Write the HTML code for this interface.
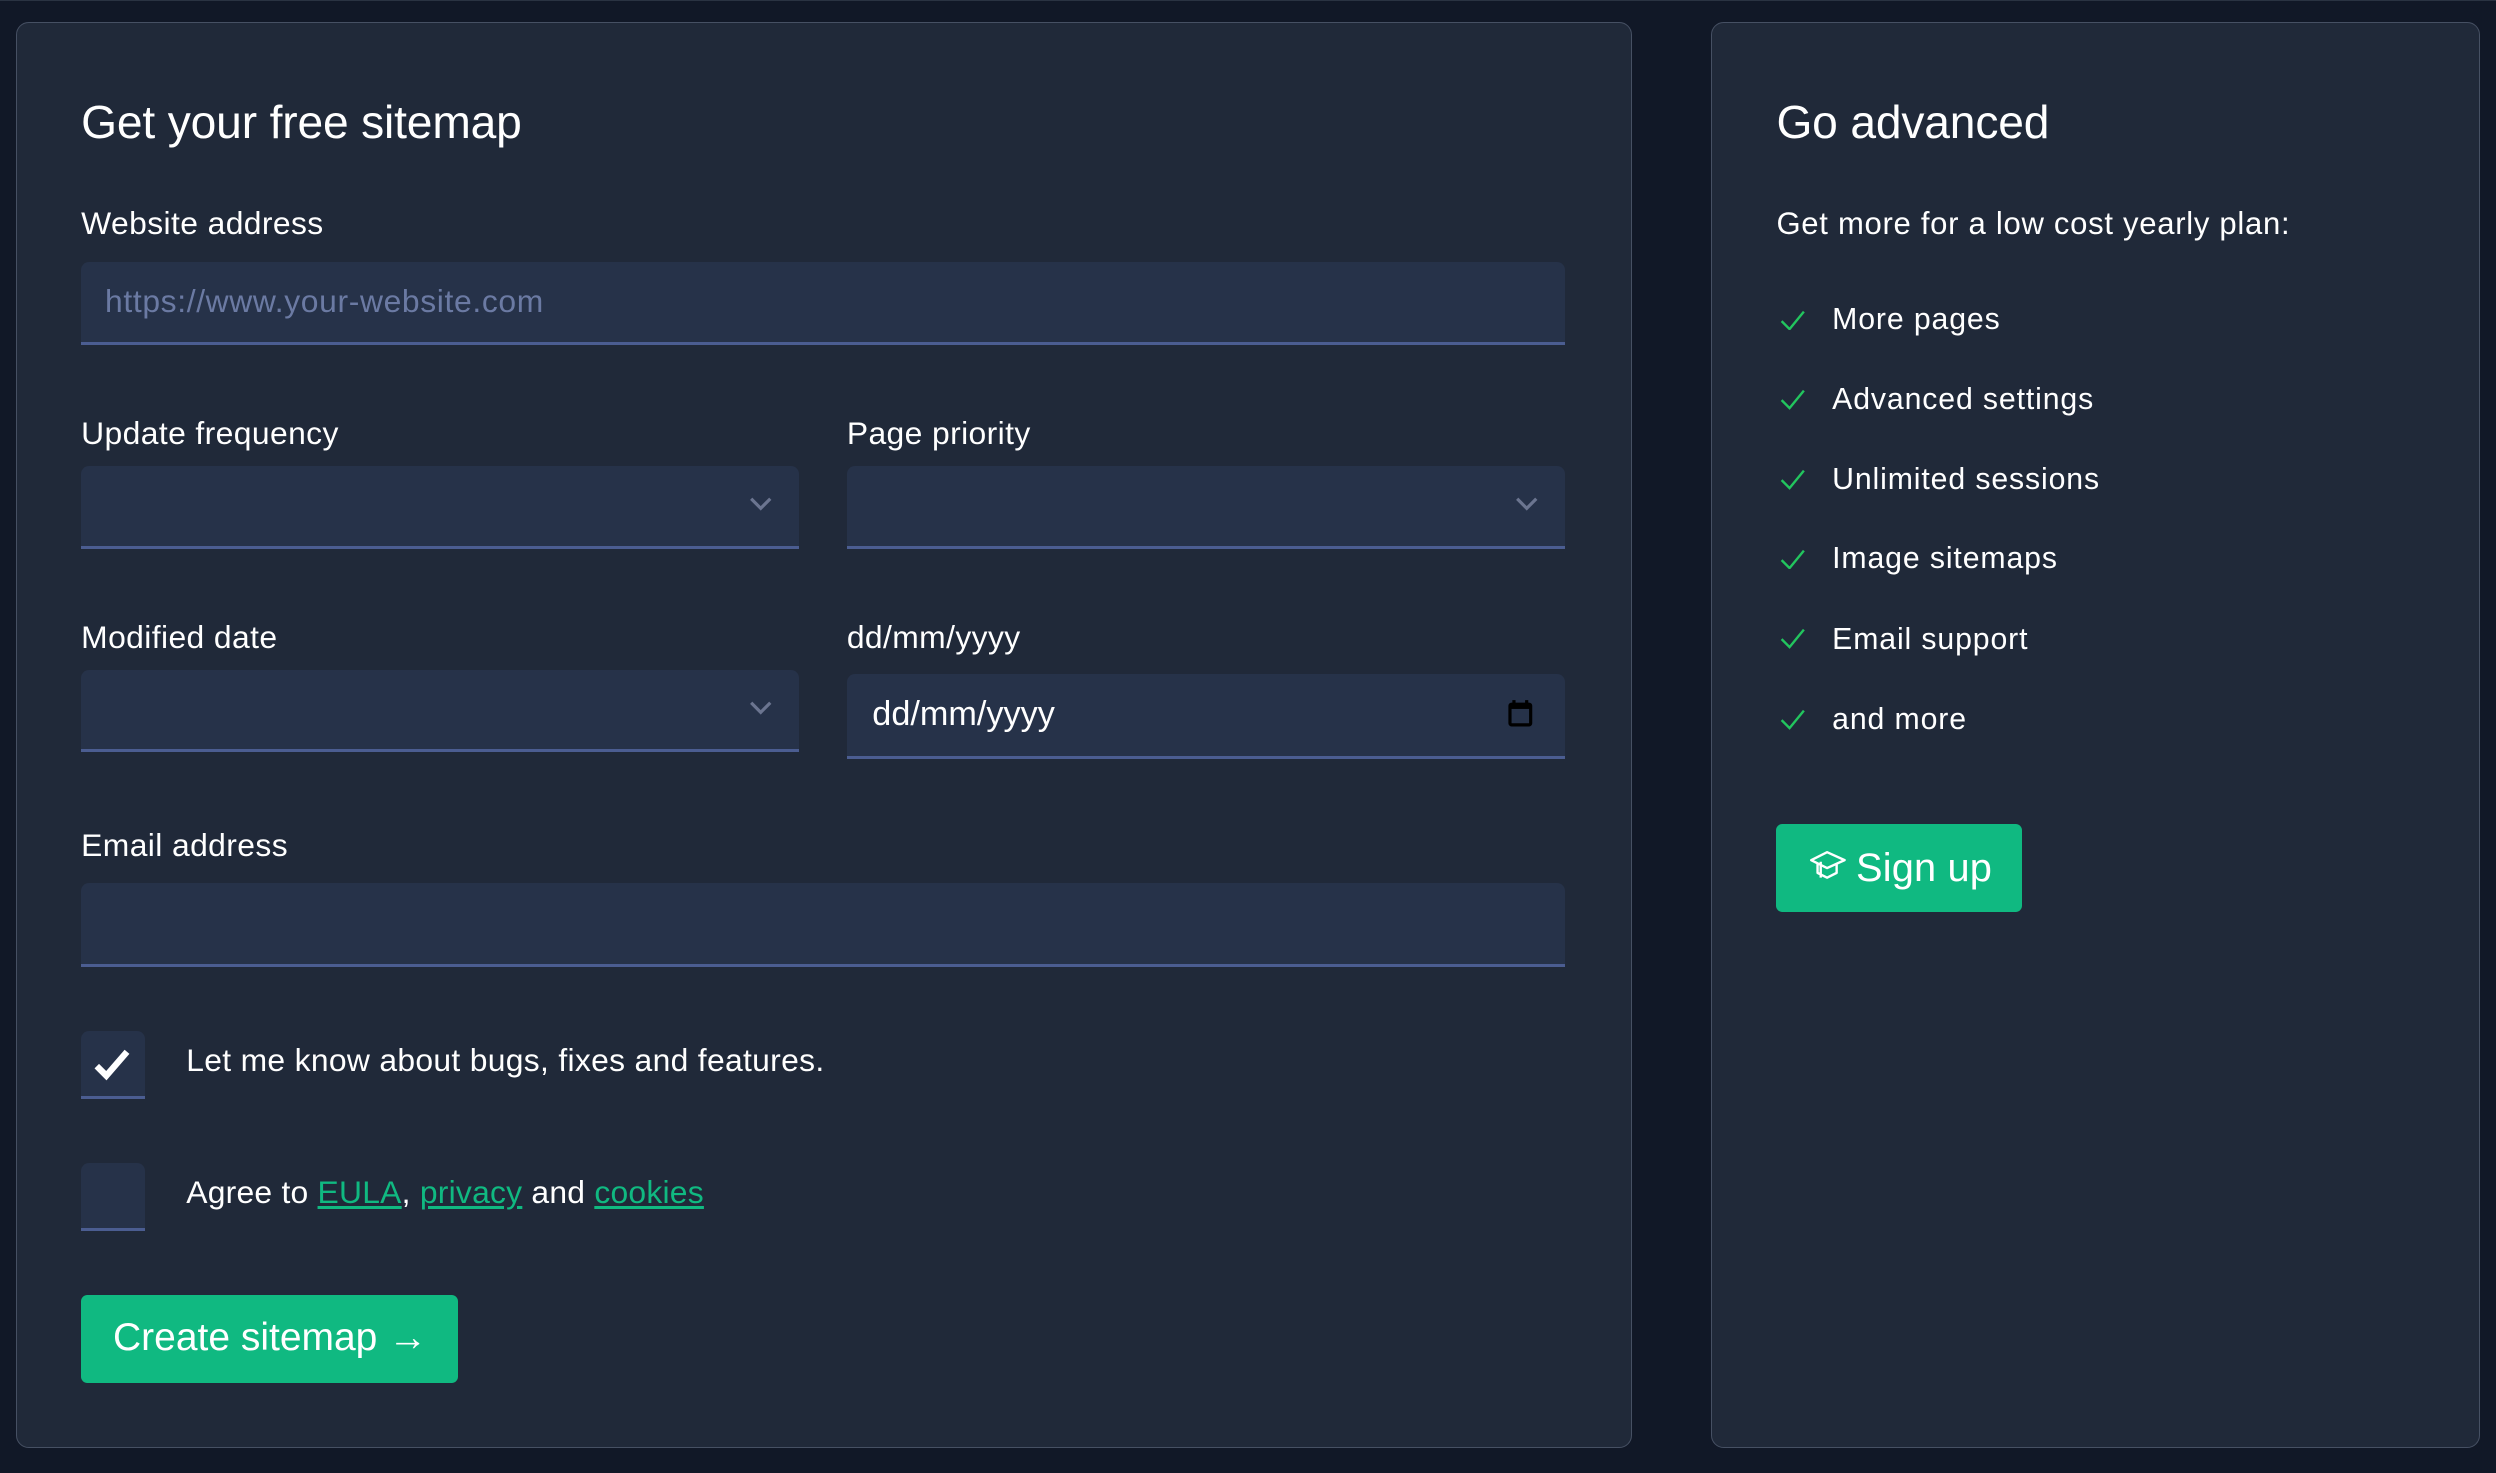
<!DOCTYPE html>
<html><head><meta charset="utf-8"><style>
html,body{margin:0;padding:0;background:#111827;overflow:hidden}
body{width:2496px;height:1473px}
#w{zoom:1.5918;position:relative;width:1568px;height:925px;font-family:"Liberation Sans",Arial,sans-serif;color:#fff;border-top:1px solid #2a3342}
.panel{position:absolute;background:#202939;border:1px solid #465063;border-radius:8px;box-sizing:border-box}
.a{position:absolute;white-space:nowrap}
.h{font-size:29px;letter-spacing:-0.1px}
.l{font-size:20px;letter-spacing:0.25px}
.in{position:absolute;background:#263249;border-bottom:2.5px solid #4b5d91;border-radius:5px 5px 0 0;box-sizing:border-box}
.chev{position:absolute;right:16px;top:18px}
.btn{position:absolute;background:#10b981;border-radius:4px}
a{color:#10b981;text-decoration:underline;text-underline-offset:2px}
.ck{position:absolute;left:1118px}
.it{position:absolute;left:1151px;font-size:19px;letter-spacing:0.55px}
</style></head><body><div id="w">
<div class="panel" style="left:10px;top:13px;width:1015px;height:896px"></div>
<div class="panel" style="left:1075px;top:13px;width:483px;height:896px"></div>

<div class="a h" style="left:51px;top:59px">Get your free sitemap</div>
<div class="a l" style="left:51px;top:128px">Website address</div>
<div class="in" style="left:51px;top:164px;width:932px;height:52px"></div>
<div class="a l" style="left:66px;top:177px;color:#6b7aa3;letter-spacing:0.4px">https://www.your-website.com</div>

<div class="a l" style="left:51px;top:260px">Update frequency</div>
<div class="a l" style="left:532px;top:260px">Page priority</div>
<div class="in" style="left:51px;top:292px;width:451px;height:52px"><svg class="chev" width="16" height="12" viewBox="0 0 16 12"><path d="M2 3l6 6 6-6" stroke="#6b7590" stroke-width="2" fill="none"/></svg></div>
<div class="in" style="left:532px;top:292px;width:451px;height:52px"><svg class="chev" width="16" height="12" viewBox="0 0 16 12"><path d="M2 3l6 6 6-6" stroke="#6b7590" stroke-width="2" fill="none"/></svg></div>

<div class="a l" style="left:51px;top:388px">Modified date</div>
<div class="a l" style="left:532px;top:388px">dd/mm/yyyy</div>
<div class="in" style="left:51px;top:420px;width:451px;height:52px"><svg class="chev" width="16" height="12" viewBox="0 0 16 12"><path d="M2 3l6 6 6-6" stroke="#6b7590" stroke-width="2" fill="none"/></svg></div>
<div class="in" style="left:532px;top:423px;width:451px;height:53px"><svg style="position:absolute;left:414px;top:14px" width="18" height="20" viewBox="0 0 18 20"><rect x="2.5" y="4.5" width="13" height="13" rx="1" fill="none" stroke="#000" stroke-width="2"/><rect x="2.5" y="4.5" width="13" height="3" fill="#000"/><path d="M5 2v3M13 2v3" stroke="#000" stroke-width="2"/></svg></div>
<div class="a" style="left:548px;top:436px;font-size:21.5px">dd/mm/yyyy</div>

<div class="a l" style="left:51px;top:519px">Email address</div>
<div class="in" style="left:51px;top:554px;width:932px;height:53px"></div>

<div class="in" style="left:51px;top:647px;width:40px;height:43px;border-radius:5px 5px 0 0"><svg style="position:absolute;left:7px;top:10px" width="26" height="22" viewBox="0 0 26 22"><path d="M3 12l6 6L22 3" stroke="#fff" stroke-width="4" fill="none"/></svg></div>
<div class="a l" style="left:117px;top:654px;letter-spacing:0.2px">Let me know about bugs, fixes and features.</div>
<div class="in" style="left:51px;top:730px;width:40px;height:43px"></div>
<div class="a l" style="left:117px;top:737px;letter-spacing:0.15px">Agree to <a>EULA</a>, <a>privacy</a> and <a>cookies</a></div>

<div class="btn" style="left:51px;top:813px;width:237px;height:55px"></div>
<div class="a" style="left:71px;top:826px;font-size:24.5px">Create sitemap <span>&#8594;</span></div>

<div class="a h" style="left:1116px;top:59px">Go advanced</div>
<div class="a l" style="left:1116px;top:129px;font-size:19.5px;letter-spacing:0.45px">Get more for a low cost yearly plan:</div>
<svg class="ck" style="top:194px" width="16" height="13" viewBox="0 0 16 13"><path d="M1 7l5 5L15 1" stroke="#22c55e" stroke-width="1.5" fill="none"/></svg>
<div class="it" style="top:190px">More pages</div>
<svg class="ck" style="top:244px" width="16" height="13" viewBox="0 0 16 13"><path d="M1 7l5 5L15 1" stroke="#22c55e" stroke-width="1.5" fill="none"/></svg>
<div class="it" style="top:240px">Advanced settings</div>
<svg class="ck" style="top:294px" width="16" height="13" viewBox="0 0 16 13"><path d="M1 7l5 5L15 1" stroke="#22c55e" stroke-width="1.5" fill="none"/></svg>
<div class="it" style="top:290px">Unlimited sessions</div>
<svg class="ck" style="top:344px" width="16" height="13" viewBox="0 0 16 13"><path d="M1 7l5 5L15 1" stroke="#22c55e" stroke-width="1.5" fill="none"/></svg>
<div class="it" style="top:340px">Image sitemaps</div>
<svg class="ck" style="top:394px" width="16" height="13" viewBox="0 0 16 13"><path d="M1 7l5 5L15 1" stroke="#22c55e" stroke-width="1.5" fill="none"/></svg>
<div class="it" style="top:391px">Email support</div>
<svg class="ck" style="top:445px" width="16" height="13" viewBox="0 0 16 13"><path d="M1 7l5 5L15 1" stroke="#22c55e" stroke-width="1.5" fill="none"/></svg>
<div class="it" style="top:441px">and more</div>

<div class="btn" style="left:1116px;top:517px;width:154px;height:55px"></div>
<svg style="position:absolute;left:1136px;top:533px" width="25" height="22" viewBox="0 0 25 22"><path d="M2 7l10-5 11 5-11 5z M6 9v6l6 3 6-3V9 M8 8v10" stroke="#fff" stroke-width="1.5" fill="none" stroke-linejoin="round"/></svg>
<div class="a" style="left:1166px;top:531px;font-size:25px;letter-spacing:0.1px">Sign up</div>
</div></body></html>
